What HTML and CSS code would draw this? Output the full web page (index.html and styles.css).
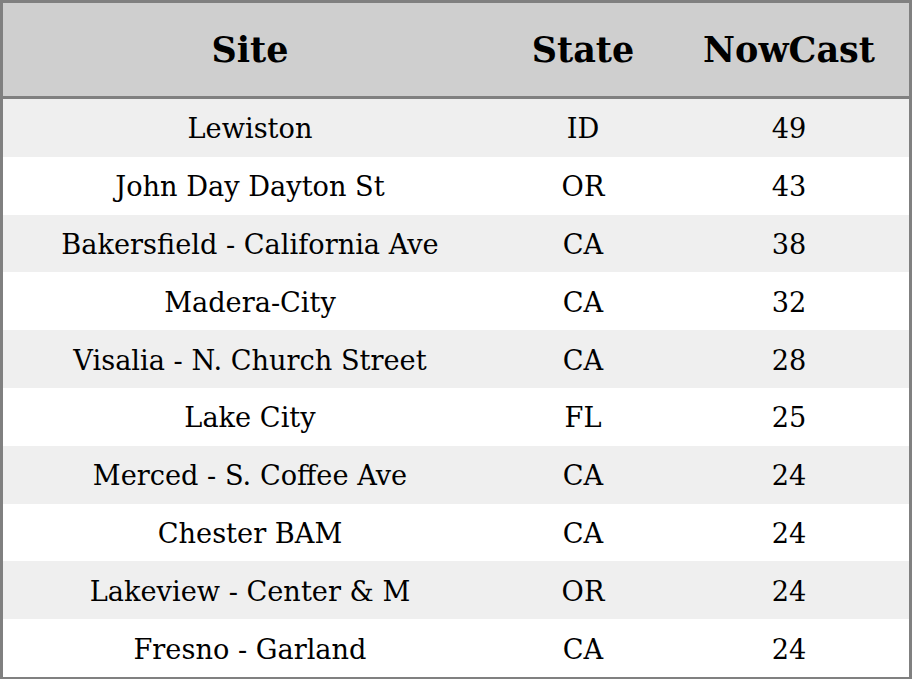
FILE: index.html
```html
<!DOCTYPE html>
<html>
<head>
<meta charset="utf-8">
<link rel="stylesheet" href="styles.css">
</head>
<body>
<table class="aq">
  <thead>
    <tr><th class="c-site">Site</th><th class="c-state">State</th><th class="c-now">NowCast</th></tr>
  </thead>
  <tbody>
    <tr><td>Lewiston</td><td>ID</td><td>49</td></tr>
    <tr><td>John Day Dayton St</td><td>OR</td><td>43</td></tr>
    <tr><td>Bakersfield - California Ave</td><td>CA</td><td>38</td></tr>
    <tr><td>Madera-City</td><td>CA</td><td>32</td></tr>
    <tr><td>Visalia - N. Church Street</td><td>CA</td><td>28</td></tr>
    <tr><td>Lake City</td><td>FL</td><td>25</td></tr>
    <tr><td>Merced - S. Coffee Ave</td><td>CA</td><td>24</td></tr>
    <tr><td>Chester BAM</td><td>CA</td><td>24</td></tr>
    <tr><td>Lakeview - Center &amp; M</td><td>OR</td><td>24</td></tr>
    <tr><td>Fresno - Garland</td><td>CA</td><td>24</td></tr>
  </tbody>
</table>
</body>
</html>
```

FILE: styles.css
```css
html, body {
  margin: 0;
  padding: 0;
  background: #ffffff;
}
.aq {
  width: 912px;
  height: 679px;
  border-collapse: separate;
  border-spacing: 0;
  border: 3px solid #808080;
  box-sizing: border-box;
  font-family: "DejaVu Serif", serif;
  color: #000;
  table-layout: fixed;
}
.aq th {
  background: #cfcfcf;
  font-size: 35px;
  font-weight: bold;
  height: 93px;
  padding: 0;
  border-bottom: 3px solid #808080;
  text-align: center;
  vertical-align: middle;
}
.c-site { width: 494px; }
.c-state { width: 172px; }
.c-now { width: 240px; }
.aq td {
  font-size: 27.2px;
  height: 55.8px;
  padding: 2px 0 0 0;
  text-align: center;
  vertical-align: middle;
}
.aq tbody tr:nth-child(odd) td {
  background: #efefef;
}
```
